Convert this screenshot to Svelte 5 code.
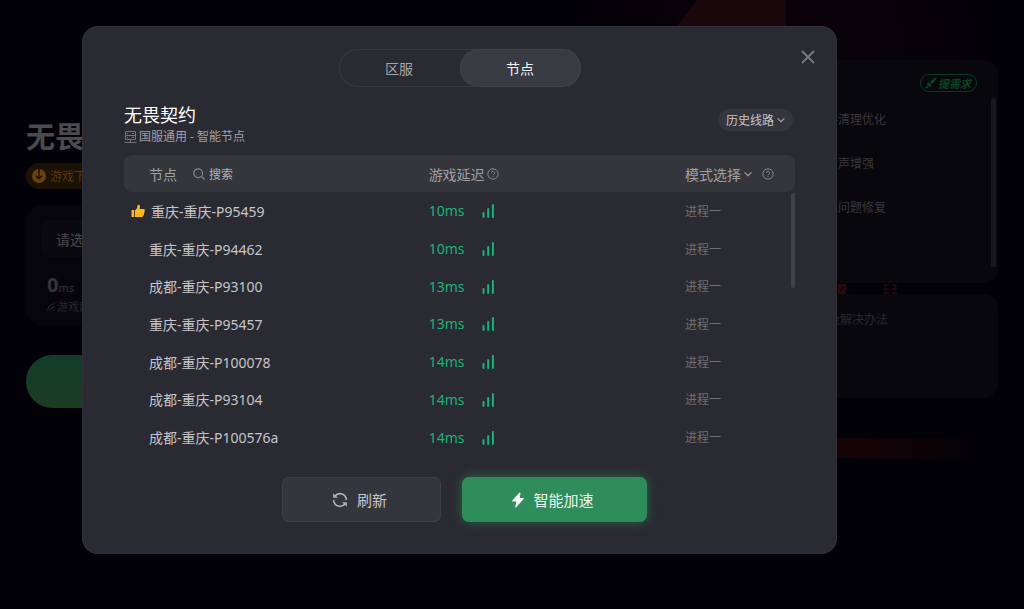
<script lang="ts">
	type Server = { name: string; ping: number; recommended?: boolean };

	const servers: Server[] = [
		{ name: '重庆-重庆-P95459', ping: 10, recommended: true },
		{ name: '重庆-重庆-P94462', ping: 10 },
		{ name: '成都-重庆-P93100', ping: 13 },
		{ name: '重庆-重庆-P95457', ping: 13 },
		{ name: '成都-重庆-P100078', ping: 14 },
		{ name: '成都-重庆-P93104', ping: 14 },
		{ name: '成都-重庆-P100576a', ping: 14 }
	];

	const tools = ['内存清理优化', '脚步声增强', '常见问题修复'];

	let tab = $state('node');
	let open = $state(true);
</script>

{#snippet help()}
	<svg class="help" viewBox="0 0 12 12" width="12" height="12" aria-hidden="true">
		<circle cx="6" cy="6" r="5.2" />
		<path d="M4.4 4.8a1.6 1.6 0 1 1 2.5 1.3c-.6.4-.9.6-.9 1.1M6 8.3v.9" />
	</svg>
{/snippet}

{#snippet chevron()}
	<svg class="chevron" viewBox="0 0 8 8" width="8" height="8" aria-hidden="true">
		<path d="M.6 2.4 4 5.6l3.4-3.2" />
	</svg>
{/snippet}

<div class="page">
	<svg class="art" viewBox="0 0 1024 609" preserveAspectRatio="none" aria-hidden="true">
		<defs>
			<linearGradient id="band">
				<stop offset="0.35" stop-color="#150408" />
				<stop offset="0.6" stop-color="#0e0307" />
				<stop offset="1" stop-color="#020106" />
			</linearGradient>
			<radialGradient id="glow">
				<stop offset="0" stop-color="#0c0209" />
				<stop offset="1" stop-color="#020107" />
			</radialGradient>
		</defs>
		<ellipse cx="780" cy="40" rx="230" ry="180" fill="url(#glow)" />
		<path d="M697 0h89v60H650z" fill="#19070c" />
		<path d="M786 438h180l20 22-149-2-51-4z" fill="url(#band)" />
		<path d="M838 284h8v10h-8z" fill="#2b090d" />
		<path d="m840 291 4-5" stroke="#090206" stroke-width="1.3" />
		<path d="M883 285h6m-6 4h5m-5 4h6m3-8h5m-5 4h5m-5 4h5m-2-9v10m-9-9v9" stroke="#26090d" stroke-width="1.3" />
	</svg>

	<main class="game">
		<h1>无畏契约</h1>
		<button class="download">
			<svg viewBox="0 0 14 14" width="14" height="14" aria-hidden="true">
				<circle cx="7" cy="7" r="7" fill="#6a4208" />
				<path d="M7 0v9.6M4 6.8l3 3 3-3" fill="none" stroke="#1a1004" stroke-width="1.5" />
			</svg>
			游戏下载
		</button>
		<section class="status">
			<button class="server">请选择区服</button>
			<div class="ping"><b>0</b>ms</div>
			<div class="ping-label">
				<svg viewBox="0 0 8 8" width="8" height="8" aria-hidden="true">
					<path d="M.8 7.5A6.7 6.7 0 0 1 7.4.8M3.4 7.5a4 4 0 0 1 4-4M6.2 7.5h1" />
				</svg>
				游戏延迟
			</div>
		</section>
		<button class="start" aria-label="开始"></button>
	</main>

	<aside>
		<section class="tools">
			<button class="request">
				<svg viewBox="0 0 12 12" width="12" height="12" aria-hidden="true">
					<path d="M11.8.2C9.600.8 6.800 2.800 5 5l2 2c2.200-1.800 4.200-4.600 4.800-6.800zM4.300 5.600c-1.400-.2-2.300.7-2.400 1.900l2.600 2.600c1.200-.1 2-1 1.900-2.400zM1.500 8.300c-.2 1-.5 2-1.100 3.100 1.200-.1 2.200-.3 3.100-.9z" />
				</svg>
				提需求
			</button>
			<ul>
				{#each tools as tool}
					<li>{tool}</li>
				{/each}
			</ul>
			<div class="bar"></div>
		</section>
		<section class="faq">常见问题及解决办法</section>
	</aside>
</div>

{#if open}
	<div class="overlay">
		<div class="dialog" role="dialog" aria-modal="true" aria-label="无畏契约">
			<button class="close" aria-label="关闭" onclick={() => (open = false)}>
				<svg viewBox="0 0 14 14" width="14" height="14" aria-hidden="true">
					<path d="m1 1 12 12M13 1 1 13" />
				</svg>
			</button>

			<div class="tabs" role="tablist">
				<button role="tab" aria-selected={tab === 'region'} class:active={tab === 'region'} onclick={() => (tab = 'region')}>区服</button>
				<button role="tab" aria-selected={tab === 'node'} class:active={tab === 'node'} onclick={() => (tab = 'node')}>节点</button>
			</div>

			<header>
				<div>
					<h2>无畏契约</h2>
					<p>
						<svg viewBox="0 0 13 14" width="13" height="14" aria-hidden="true">
							<path d="M1.5 1.5h10v4h-10zM1.5 5.5h10v4h-10zM6.5 9.5v3M.5 12.5h12" />
							<path d="M3 3.500h1M3 7.500h1M8 3.500h2M8 7.500h2" />
						</svg>
						国服通用 - 智能节点
					</p>
				</div>
				<button class="history">历史线路 {@render chevron()}</button>
			</header>

			<div class="list">
				<table>
					<thead>
						<tr>
							<th class="name">
								<div class="cell">
									节点
									<button class="search">
										<svg viewBox="0 0 12 12" width="12" height="12" aria-hidden="true">
											<circle cx="5.2" cy="5.2" r="4.4" />
											<path d="m8.5 8.5 3 3" />
										</svg>
										搜索
									</button>
								</div>
							</th>
							<th class="delay"><div class="cell hint">游戏延迟 {@render help()}</div></th>
							<th>
								<div class="cell">
									<button class="mode">模式选择 {@render chevron()}</button>
									{@render help()}
								</div>
							</th>
						</tr>
					</thead>
					<tbody>
						{#each servers as server}
							<tr>
								<td class="name">
									{#if server.recommended}
										<div class="cell liked">
											<svg viewBox="0 0 14 14" width="14" height="14" aria-hidden="true">
												<path d="M.5 6h2.700v7H.5zM4 6.200c1.600-1 2.300-2.500 2.400-4.500C6.500.5 9 .3 9 3.100c0 .8-.2 1.400-.4 2h3.900c1 0 1.500.7 1.300 1.600l-1.300 4.900c-.2.900-.8 1.400-1.700 1.400H4z" />
											</svg>
											{server.name}
										</div>
									{:else}
										{server.name}
									{/if}
								</td>
								<td class="delay">
									<div class="cell">
										<span class="ms">{server.ping}ms</span>
										<svg viewBox="0 0 13 15" width="13" height="15" aria-hidden="true">
											<path d="M1.500 10v4M6.200 6v8M10.900 2v12" />
										</svg>
									</div>
								</td>
								<td class="process">进程一</td>
							</tr>
						{/each}
					</tbody>
				</table>
				<div class="thumb"></div>
			</div>

			<div class="actions">
				<button class="refresh">
					<svg viewBox="0 0 16 16" width="16" height="16" aria-hidden="true">
						<path d="M3 4.200A6.300 6.300 0 0 1 14.300 8M13 11.800A6.300 6.300 0 0 1 1.700 8" />
						<path class="tip" d="M1.200 1.200 6 5.800H1.200zM14.800 14.800 10 10.200h4.800z" />
					</svg>
					刷新
				</button>
				<button class="boost">
					<svg viewBox="0 0 14 16" width="14" height="16" aria-hidden="true">
						<path d="M8.300.7 1.300 8.500c-.4.500-.1 1 .4 1h3.800l-1.300 5.300c-.1.600.5.800.9.400l7.500-8.300c.4-.4.1-1-.4-1H8.700L9.500 1.100c.1-.6-.8-.9-1.200-.4z" />
					</svg>
					智能加速
				</button>
			</div>
		</div>
	</div>
{/if}

<style>
	:global(body) {
		background: #020107;
		font-family: 'Noto Sans', 'Noto Sans CJK SC', sans-serif;
		font-size: 14px;
	}

	button {
		display: flex;
		align-items: center;
		justify-content: center;
		padding: 0;
		border: none;
		background: none;
		color: inherit;
		font: inherit;
		cursor: pointer;
	}

	svg {
		flex: none;
	}

	.page {
		position: relative;
		display: flex;
		justify-content: space-between;
		gap: 24px;
		box-sizing: border-box;
		min-height: 100vh;
		padding: 60px 26px 0;
		overflow: hidden;
	}

	.art {
		position: absolute;
		inset: 0;
		width: 100%;
		height: 100%;
		fill: none;
	}

	.game {
		position: relative;
		flex: 0 1 320px;
		padding-top: 57px;
	}

	h1 {
		max-width: 90px;
		margin: 0 0 6px;
		overflow: hidden;
		white-space: nowrap;
		font-size: 29px;
		line-height: 40px;
		font-weight: 700;
		color: #4b4a4d;
	}

	.download {
		gap: 4px;
		height: 26px;
		padding: 0 16px 0 6px;
		border-radius: 13px;
		background: #1b1105;
		color: #5b3808;
		font-size: 12px;
	}

	.status {
		box-sizing: border-box;
		height: 120px;
		margin: 16px 0 30px;
		padding: 15px;
		border-radius: 16px;
		background: #06050a;
	}

	.server {
		justify-content: flex-start;
		width: 100%;
		height: 37px;
		padding: 0 15px;
		border-radius: 8px;
		background: #0a090f;
		color: #4b4a4d;
	}

	.ping {
		margin: 16px 0 0 6px;
		line-height: 24px;
		font-size: 11px;
		color: #353438;
	}

	.ping b {
		font-size: 20px;
	}

	.ping-label {
		display: flex;
		align-items: center;
		gap: 2px;
		margin-left: 6px;
		font-size: 11px;
		line-height: 14px;
		color: #29282c;
	}

	.ping-label svg {
		fill: none;
		stroke: #29282c;
	}

	.start {
		width: 100%;
		height: 53px;
		border-radius: 27px;
		background: linear-gradient(#123d29, #1c3b22);
	}

	aside {
		position: relative;
		flex: 0 0 262px;
	}

	.tools {
		position: relative;
		box-sizing: border-box;
		height: 223px;
		margin-bottom: 11px;
		padding: 14px 21px 0 78px;
		border-radius: 14px;
		background: #08070c;
	}

	.request {
		gap: 1px;
		box-sizing: border-box;
		height: 18px;
		margin-left: auto;
		padding: 0 5px 0 4px;
		border: 1px solid #0a3b20;
		border-radius: 9px;
		font-size: 11px;
		font-weight: 700;
		font-style: italic;
		color: #0b4425;
	}

	.request svg {
		fill: #0b4425;
	}

	ul {
		margin: 6px 0 0;
		padding: 0;
		list-style: none;
	}

	li {
		font-size: 12px;
		line-height: 44px;
		color: #38373b;
	}

	.bar {
		position: absolute;
		top: 38px;
		right: 2px;
		width: 5px;
		height: 169px;
		border-radius: 2px;
		background: #18171b;
	}

	.faq {
		box-sizing: border-box;
		height: 104px;
		padding: 16px 0 0 44px;
		border-radius: 14px;
		background: #08070c;
		font-size: 12px;
		line-height: 20px;
		color: #28272b;
	}

	.overlay {
		position: absolute;
		top: 0;
		left: 0;
		right: 0;
		padding: 26px 187px 55px 82px;
	}

	.dialog {
		position: relative;
		box-sizing: border-box;
		padding: 23px 42px 32px;
		border-radius: 16px;
		background: #2a2a32;
		box-shadow: inset 0 0 0 1px #303138;
		color: #c6c6c9;
	}

	.close {
		position: absolute;
		top: 21px;
		right: 19px;
		width: 20px;
		height: 20px;
	}

	.close path {
		stroke: #77777c;
		stroke-width: 2;
	}

	.tabs {
		display: flex;
		box-sizing: border-box;
		width: 242px;
		height: 38px;
		margin: 0 auto 16px;
		border-radius: 19px;
		box-shadow: inset 0 0 0 1px #383840;
		color: #a7a7ab;
	}

	.tabs button {
		flex: 1;
		border-radius: 19px;
	}

	.tabs .active {
		background: #3a3a42;
		box-shadow: inset 0 0 0 1px #424248;
		color: #f2f2f3;
	}

	header {
		display: flex;
		align-items: flex-start;
		justify-content: space-between;
		margin-bottom: 8px;
	}

	h2 {
		margin: 0;
		font-size: 18px;
		line-height: 24px;
		font-weight: 400;
		color: #fff;
	}

	p {
		display: flex;
		align-items: center;
		gap: 2px;
		margin: 0;
		font-size: 12px;
		line-height: 20px;
		color: #a0a0a4;
	}

	p svg {
		fill: none;
		stroke: #74747a;
	}

	.chevron {
		fill: none;
		stroke: #a0a0a4;
		stroke-width: 1.2;
	}

	.help {
		fill: none;
		stroke: #85858a;
	}

	.history {
		gap: 3px;
		height: 22px;
		margin: 6px 2px 0 0;
		padding: 0 8px;
		border-radius: 11px;
		background: #35353d;
		font-size: 12px;
	}

	.list {
		position: relative;
		margin-bottom: 21px;
	}

	table {
		width: 100%;
		height: 301px;
		border-collapse: collapse;
		table-layout: fixed;
	}

	th {
		height: 37px;
		padding: 0;
		background: #35353c;
		font-weight: 400;
		text-align: left;
		color: #a0a0a4;
	}

	th:first-child {
		border-radius: 8px 0 0 8px;
	}

	th:last-child {
		border-radius: 0 8px 8px 0;
	}

	td {
		padding: 0;
	}

	.name {
		padding-left: 25px;
	}

	th.name,
	th.delay {
		box-sizing: border-box;
	}

	th.name {
		width: 45.4%;
	}

	th.delay {
		width: 38.2%;
	}

	.cell {
		display: flex;
		align-items: center;
		gap: 4px;
	}

	.hint {
		gap: 2px;
	}

	.search {
		gap: 4px;
		margin-left: 12px;
		font-size: 12px;
		color: #b2b2b6;
	}

	.search svg {
		fill: none;
		stroke: #85858a;
		stroke-width: 1.2;
	}

	.mode {
		gap: 3px;
		margin-right: 6px;
	}

	.liked {
		gap: 6px;
		margin-left: -18px;
	}

	.liked svg {
		fill: #ffb91d;
	}

	td.delay {
		color: #19b37a;
	}

	.ms {
		width: 49px;
	}

	td.delay path {
		stroke: #19b37a;
		stroke-width: 2;
		stroke-linecap: round;
	}

	.process {
		font-size: 12px;
		color: #6e6e74;
	}

	.thumb {
		position: absolute;
		top: 38px;
		right: 0;
		width: 4px;
		height: 95px;
		border-radius: 2px;
		background: #41414a;
	}

	.actions {
		display: flex;
		justify-content: center;
		gap: 21px;
		padding-left: 10px;
	}

	.actions button {
		box-sizing: border-box;
		height: 45px;
		padding-right: 4px;
		border-radius: 7px;
		font-size: 15px;
	}

	.refresh {
		gap: 9px;
		width: 159px;
		background: #35353d;
		box-shadow: inset 0 0 0 1px #3e3e46;
	}

	.refresh path {
		fill: none;
		stroke: #b2b2b6;
		stroke-width: 1.6;
	}

	.refresh .tip {
		fill: #b2b2b6;
		stroke: none;
	}

	.actions .boost {
		gap: 8px;
		width: 185px;
		background: #2e8d5a;
		box-shadow: 0 0 12px #2e8d5a99;
		color: #eef6f1;
	}

	.boost path {
		fill: #fff;
	}
</style>
